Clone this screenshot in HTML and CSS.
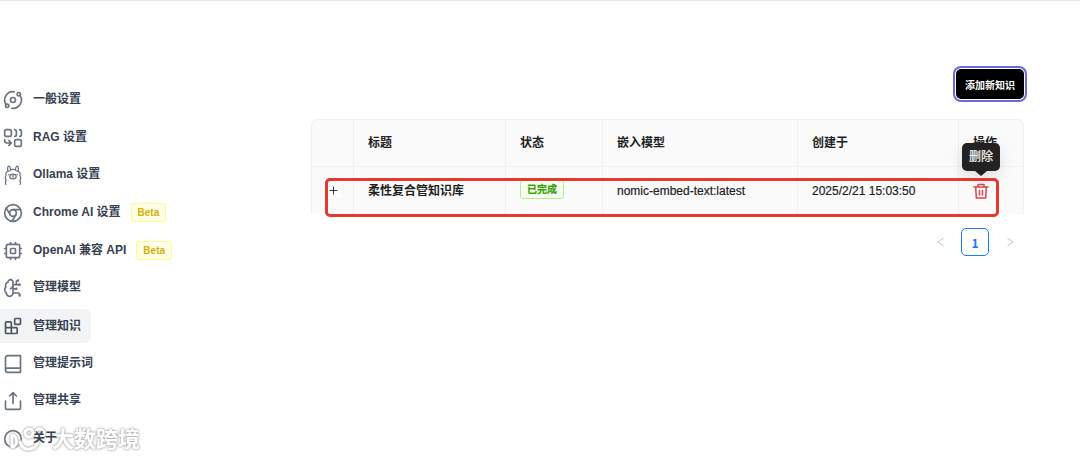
FILE: index.html
```
<!DOCTYPE html>
<html lang="zh-CN">
<head>
    <meta charset="UTF-8">
    <title>管理知识</title>
    <link rel="stylesheet" href="styles.css">
</head>
<body>
    <div class="layout">
        <nav class="sidebar">
            <ul class="menu">
                <li><a class="menu-item" href="#">
                    <svg class="icon" viewBox="0 0 24 24"><circle cx="12" cy="12" r="3"/><circle cx="19" cy="5" r="2"/><circle cx="5" cy="19" r="2"/><path d="M10.4 21.9a10 10 0 0 0 9.941-15.416M13.5 2.1a10 10 0 0 0-9.841 15.416"/></svg>
                    <span class="menu-text">一般设置</span>
                </a></li>
                <li><a class="menu-item" href="#">
                    <svg class="icon" viewBox="0 0 24 24"><rect x="2" y="2" width="8" height="8" rx="2"/><path d="M14 2a2 2 0 0 1 2 2v4a2 2 0 0 1-2 2M20 2a2 2 0 0 1 2 2v4a2 2 0 0 1-2 2M10 18H5a3 3 0 0 1-3-3v-1M7 21l3-3-3-3"/><rect x="14" y="14" width="8" height="8" rx="2"/></svg>
                    <span class="menu-text">RAG 设置</span>
                </a></li>
                <li><a class="menu-item" href="#">
                    <svg class="icon icon-thin" viewBox="0 0 24 24"><path d="M3.500 23.500c-.8-1.700-.7-3.400.3-5.100-1.300-1.900-1.300-4 0-5.800C2.700 10 3.900 8 6.500 7.400M20.500 23.500c.8-1.700.7-3.400-.3-5.100 1.300-1.900 1.300-4 0-5.800 1.100-2.600-.1-4.600-2.700-5.200M6 7.600C5.200 4.300 5.600 1.200 6.900 1.200c1.200 0 2 2.100 2.200 4.800M18 7.600c.8-3.300.4-6.400-.9-6.400-1.200 0-2 2.100-2.200 4.800M6.500 7.400c1 .2 1.800-.3 2.600-1.400 1.700-1 4.100-1 5.800 0 .8 1.100 1.600 1.600 2.600 1.400"/><ellipse cx="12" cy="13.700" rx="3.900" ry="2.900"/><path d="M11.300 13l.7.500.7-.5M12 13.500v1M6.900 11.200v.4M17.100 11.200v.4"/></svg>
                    <span class="menu-text">Ollama 设置</span>
                </a></li>
                <li><a class="menu-item" href="#">
                    <svg class="icon" viewBox="0 0 24 24"><circle cx="12" cy="12" r="10"/><circle cx="12" cy="12" r="4"/><path d="M21.170 8H12M3.950 6.060L8.540 14M10.880 21.940L15.460 14"/></svg>
                    <span class="menu-text">Chrome AI 设置</span>
                    <span class="tag tag-beta">Beta</span>
                </a></li>
                <li><a class="menu-item" href="#">
                    <svg class="icon" viewBox="0 0 24 24"><rect x="4" y="4" width="16" height="16" rx="2"/><rect x="9" y="9" width="6" height="6" rx="1"/><path d="M15 2v2M15 20v2M2 15h2M2 9h2M20 15h2M20 9h2M9 2v2M9 20v2"/></svg>
                    <span class="menu-text">OpenAI 兼容 API</span>
                    <span class="tag tag-beta">Beta</span>
                </a></li>
                <li><a class="menu-item" href="#">
                    <svg class="icon" viewBox="0 0 24 24"><path d="M12 5a3 3 0 1 0-5.997.125 4 4 0 0 0-2.526 5.770 4 4 0 0 0 .556 6.588A4 4 0 1 0 12 18ZM9 13a4.500 4.500 0 0 0 3-4M12 13h4M12 18h6a2 2 0 0 1 2 2v1M12 8h8M16 8V5a2 2 0 0 1 2-2"/><circle cx="16" cy="13" r=".5"/><circle cx="18" cy="3" r=".5"/><circle cx="20" cy="21" r=".5"/><circle cx="20" cy="8" r=".5"/></svg>
                    <span class="menu-text">管理模型</span>
                </a></li>
                <li><a class="menu-item active" href="#">
                    <svg class="icon" viewBox="0 0 24 24"><rect x="14" y="3" width="7" height="7" rx="1"/><path d="M10 21V8a1 1 0 0 0-1-1H4a1 1 0 0 0-1 1v12a1 1 0 0 0 1 1h12a1 1 0 0 0 1-1v-5a1 1 0 0 0-1-1H3"/></svg>
                    <span class="menu-text">管理知识</span>
                </a></li>
                <li><a class="menu-item" href="#">
                    <svg class="icon" viewBox="0 0 24 24"><path d="M3 19.500v-15A2.500 2.500 0 0 1 5.500 2H21v20H5.500a2.500 2.500 0 0 1 0-5H21"/></svg>
                    <span class="menu-text">管理提示词</span>
                </a></li>
                <li><a class="menu-item" href="#">
                    <svg class="icon" viewBox="0 0 24 24"><path d="M3 12v8a2 2 0 0 0 2 2h14a2 2 0 0 0 2-2v-8M16 6l-4-4-4 4M12 2v13"/></svg>
                    <span class="menu-text">管理共享</span>
                </a></li>
                <li><a class="menu-item" href="#">
                    <svg class="icon" viewBox="0 0 24 24"><circle cx="12" cy="12" r="10"/><path d="M12 16v-4M12 8h.01"/></svg>
                    <span class="menu-text">关于</span>
                </a></li>
            </ul>
        </nav>

        <main class="content">
            <div class="toolbar">
                <button class="btn-add" type="button">添加新知识</button>
            </div>

            <div class="table-wrap">
                <table class="table">
                    <colgroup>
                        <col class="col-expand">
                        <col>
                        <col class="col-status">
                        <col class="col-model">
                        <col class="col-created">
                        <col class="col-action">
                    </colgroup>
                    <thead>
                        <tr>
                            <th></th>
                            <th>标题</th>
                            <th>状态</th>
                            <th>嵌入模型</th>
                            <th>创建于</th>
                            <th>操作</th>
                        </tr>
                    </thead>
                    <tbody>
                        <tr>
                            <td class="cell-expand"><button class="btn-expand" type="button" aria-label="展开"><svg viewBox="0 0 10 10"><path d="M5 1v8M1 5h8"/></svg></button></td>
                            <td class="cell-title">柔性复合管知识库</td>
                            <td><span class="tag tag-done">已完成</span></td>
                            <td>nomic-embed-text:latest</td>
                            <td>2025/2/21 15:03:50</td>
                            <td>
                                <div class="action">
                                    <button class="btn-delete" type="button" aria-label="删除">
                                        <svg viewBox="0 0 16 16"><path d="M1 4h14M5 4V1.500h6V4M2.700 4l.6 11h9.400l.6-11M6.500 7.500v4.500M9.500 7.500v4.500"/></svg>
                                    </button>
                                    <span class="tooltip">删除</span>
                                </div>
                            </td>
                        </tr>
                    </tbody>
                </table>
                <div class="highlight"></div>
            </div>

            <div class="pagination">
                <button class="page-btn" type="button" aria-label="上一页"><svg viewBox="0 0 10 10"><path d="M8 1L2 5l6 4"/></svg></button>
                <button class="page-btn current" type="button">1</button>
                <button class="page-btn" type="button" aria-label="下一页"><svg viewBox="0 0 10 10"><path d="M2 1l6 4-6 4"/></svg></button>
            </div>
        </main>
    </div>

    <div class="watermark">
        <svg viewBox="0 0 42 30"><path d="M4 10v12M4 10c6 0 6 12 0 12M12 17c2 9 14 10 18 0"/><circle cx="21" cy="8" r="4"/><circle cx="32" cy="8" r="4"/></svg>
        <span>大数跨境</span>
    </div>
</body>
</html>
```
FILE: styles.css
```
/* styles.css */
* {
    box-sizing: border-box;
}
body {
    margin: 0;
    min-height: 100vh;
    position: relative;
    border-top: 1px solid #e5e5e5;
    background-color: #fff;
    font-family: "Liberation Sans", "Noto Sans CJK SC", sans-serif;
    font-size: 12px;
    line-height: 22px;
    color: #1f1f1f;
}
button {
    font-family: inherit;
    padding: 0;
    border: none;
    background: none;
    cursor: pointer;
}
svg {
    display: block;
    fill: none;
    stroke: currentColor;
    stroke-linecap: round;
    stroke-linejoin: round;
}
.layout {
    display: grid;
    grid-template-columns: 311px 1fr;
    padding-right: 56px;
}

/* sidebar */
.sidebar {
    padding-top: 82px;
}
.menu {
    list-style: none;
    margin: 0;
    padding: 0;
    height: 373px;
    display: flex;
    flex-direction: column;
    justify-content: space-between;
    align-items: flex-start;
}
.menu-item {
    display: flex;
    align-items: center;
    height: 34px;
    padding: 0 10px 0 3px;
    border-radius: 0 6px 6px 0;
    color: #374151;
    font-weight: bold;
    text-decoration: none;
}
.menu-item.active {
    background-color: #f3f4f6;
}
.icon {
    width: 20px;
    height: 20px;
    margin-right: 10px;
    stroke-width: 2;
    color: #6b7280;
}
.icon-thin {
    stroke-width: 1.5;
}
.menu-text {
    position: relative;
    z-index: 1;
    padding-bottom: 2px;
}
.active .icon {
    color: #4b5563;
}
.active .menu-text {
    padding-bottom: 0;
}
.tag {
    display: inline-block;
    height: 19px;
    padding: 0 6px;
    border: 1px solid;
    border-radius: 3px;
    font-size: 10px;
    line-height: 17px;
}
.tag-beta {
    margin-left: 10px;
    color: #d4b106;
    background-color: #feffe6;
    border-color: #fffb8f;
}
.tag-done {
    color: #389e0d;
    background-color: #f6ffed;
    border-color: #b7eb8f;
    vertical-align: top;
    font-weight: bold;
}

/* content */
.content {
    padding-top: 68px;
}
.toolbar {
    display: flex;
    justify-content: flex-end;
    margin-bottom: 21px;
}
.btn-add {
    height: 30px;
    margin-bottom: -1px;
    padding: 0 9px;
    border-radius: 5px;
    background-color: #000;
    color: #fff;
    font-size: 10px;
    font-weight: bold;
    box-shadow: 0 0 0 1px #fff, 0 0 0 3px #6c69dd;
}
.table-wrap {
    position: relative;
}
.table {
    width: 100%;
    table-layout: fixed;
    border-collapse: separate;
    border-spacing: 0;
    border: 1px solid #f0f0f0;
    border-bottom: none;
    border-radius: 7px 7px 0 0;
    background-color: #fafafa;
}
.col-expand {
    width: 42px;
}
.col-status {
    width: 97px;
}
.col-model {
    width: 195px;
}
.col-created {
    width: 161px;
}
.col-action {
    width: 64px;
}
.table th,
.table td {
    padding: 12px 14px;
    text-align: left;
    border-right: 1px solid #f0f0f0;
}
.table th:last-child,
.table td:last-child {
    border-right: none;
}
.table th {
    border-bottom: 1px solid #f0f0f0;
}
.table td {
    padding-top: 13px;
    -webkit-text-stroke: 0.2px;
}
.table .cell-title {
    font-weight: bold;
    -webkit-text-stroke: 0;
}
.table .cell-expand {
    padding: 0 14px;
}
.btn-expand {
    display: block;
    width: 15px;
    height: 15px;
    padding: 3px;
    border-radius: 3px;
    background-color: #fff;
    color: #1f1f1f;
}
.action {
    position: relative;
    width: 16px;
}
.btn-delete {
    display: block;
    width: 16px;
    height: 22px;
    color: #dc4446;
}
.btn-delete svg {
    width: 16px;
    height: 16px;
    stroke-width: 1.5;
}
.tooltip {
    position: absolute;
    bottom: 31px;
    left: 50%;
    transform: translateX(-50%);
    padding: 3px 7px;
    border-radius: 5px;
    background-color: #222;
    color: #fff;
    white-space: nowrap;
    box-shadow: 0 5px 14px rgba(0, 0, 0, 0.12);
}
.tooltip::after {
    content: "";
    position: absolute;
    top: 100%;
    left: 50%;
    margin-left: -6px;
    border: 6px solid transparent;
    border-top: 5px solid #222;
    border-bottom: none;
}
.highlight {
    position: absolute;
    left: 14px;
    right: 25px;
    bottom: -3px;
    height: 39px;
    border: 3px solid #e23a2e;
    border-radius: 5px;
    pointer-events: none;
}
.pagination {
    display: flex;
    justify-content: flex-end;
    gap: 7px;
    margin-top: 14px;
}
.page-btn {
    display: flex;
    align-items: center;
    justify-content: center;
    width: 28px;
    height: 28px;
    color: #bfbfbf;
    font-size: 12px;
}
.page-btn svg {
    width: 9px;
    height: 10px;
}
.page-btn.current {
    border: 1px solid #1677ff;
    border-radius: 5px;
    color: #1677ff;
    font-family: "Noto Sans CJK SC", sans-serif;
    font-weight: bold;
}

/* watermark over the bottom left corner */
.watermark {
    position: absolute;
    left: 8px;
    bottom: 4px;
    display: flex;
    align-items: center;
    gap: 2px;
    color: #fff;
    font-size: 22px;
    line-height: 30px;
    font-weight: bold;
    filter: drop-shadow(0 0 1px #aaa) drop-shadow(0 0 1px #ccc);
    pointer-events: none;
}
.watermark svg {
    width: 42px;
    height: 30px;
    stroke-width: 3;
}
```
